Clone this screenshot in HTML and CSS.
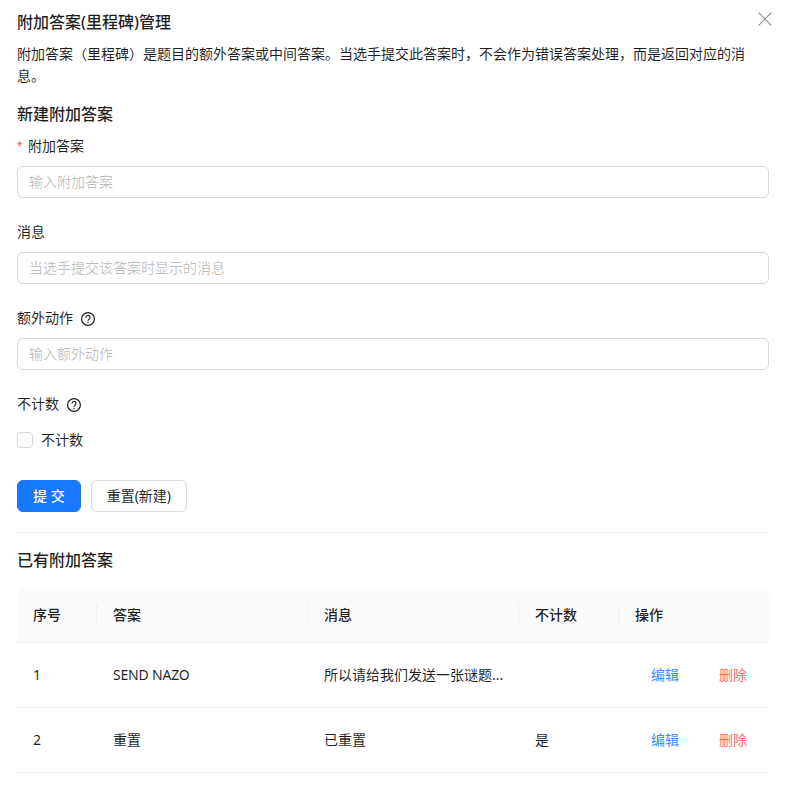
FILE: index.html
```html
<!DOCTYPE html>
<html lang="zh-CN">
<head>
<meta charset="utf-8">
<title>附加答案(里程碑)管理</title>
<link rel="stylesheet" href="styles.css">
</head>
<body>
<div class="modal">
  <button class="close" type="button" aria-label="关闭">
    <svg width="14" height="14" viewBox="0 0 14 14"><path d="M.7.7l12.6 12.6M13.3.7L.7 13.3" fill="none" stroke="currentColor" stroke-width="1.2"/></svg>
  </button>
  <h1 class="title">附加答案(里程碑)管理</h1>
  <p class="desc">附加答案（里程碑）是题目的额外答案或中间答案。当选手提交此答案时，不会作为错误答案处理，而是返回对应的消息。</p>
  <h2 class="section first">新建附加答案</h2>
  <form class="form">
    <div class="item">
      <label class="label"><span class="req">*</span>附加答案</label>
      <input class="input" placeholder="输入附加答案">
    </div>
    <div class="item">
      <label class="label">消息</label>
      <input class="input" placeholder="当选手提交该答案时显示的消息">
    </div>
    <div class="item">
      <label class="label">额外动作<svg class="help" width="14" height="14" viewBox="0 0 14 14"><circle cx="7" cy="7" r="6.4" fill="none" stroke="currentColor" stroke-width="1.2"/><path d="M5 5.5a2 2 0 1 1 3 1.7c-.7.4-1 .8-1 1.5" fill="none" stroke="currentColor" stroke-width="1.2"/><circle cx="7" cy="10.4" r=".75" fill="currentColor"/></svg></label>
      <input class="input" placeholder="输入额外动作">
    </div>
    <div class="item">
      <label class="label">不计数<svg class="help" width="14" height="14" viewBox="0 0 14 14"><circle cx="7" cy="7" r="6.4" fill="none" stroke="currentColor" stroke-width="1.2"/><path d="M5 5.5a2 2 0 1 1 3 1.7c-.7.4-1 .8-1 1.5" fill="none" stroke="currentColor" stroke-width="1.2"/><circle cx="7" cy="10.4" r=".75" fill="currentColor"/></svg></label>
      <div class="check-row"><span class="checkbox"></span><span>不计数</span></div>
    </div>
    <div class="buttons">
      <button class="btn primary" type="button">提 交</button>
      <button class="btn" type="button">重置(新建)</button>
    </div>
  </form>
  <hr class="divider">
  <h2 class="section">已有附加答案</h2>
  <table class="table">
    <colgroup><col class="c1"><col class="c2"><col class="c3"><col class="c4"><col class="c5"></colgroup>
    <thead>
      <tr><th>序号</th><th>答案</th><th>消息</th><th>不计数</th><th>操作</th></tr>
    </thead>
    <tbody>
      <tr>
        <td>1</td><td><span class="latin">SEND NAZO</span></td><td class="nowrap">所以请给我们发送一张谜题...</td><td></td>
        <td class="actions"><a class="link">编辑</a><a class="link danger">删除</a></td>
      </tr>
      <tr>
        <td>2</td><td>重置</td><td>已重置</td><td>是</td>
        <td class="actions"><a class="link">编辑</a><a class="link danger">删除</a></td>
      </tr>
    </tbody>
  </table>
</div>
</body>
</html>
```
FILE: styles.css
```css
* { box-sizing: border-box; }
html, body { margin: 0; background: #fff; }
body {
  font-family: "Noto Sans", "Noto Sans CJK SC", sans-serif;
  font-size: 14px;
  line-height: 22px;
  color: rgba(0,0,0,.88);
  height: 786px;
  overflow: hidden;
}
.modal { position: relative; padding: 10px 20px 0 17px; }
.close {
  position: absolute; top: 12px; right: 17px;
  width: 14px; height: 14px; padding: 0; border: 0; background: none;
  color: rgba(0,0,0,.45); display: flex;
}
.title { margin: 0 0 9px; font-size: 16px; line-height: 24px; font-weight: 500; }
.desc { margin: 0; width: 752px; }
.section { margin: 0; font-size: 16px; line-height: 24px; font-weight: 500; }
.section.first { margin: 15px 0 10px; }
.item { margin-bottom: 24px; }
.label { display: flex; align-items: flex-start; height: 22px; line-height: 20px; margin-bottom: 8px; }
.req { color: #ff4d4f; margin-right: 4px; font-family: "Liberation Sans", sans-serif; width: 7px; }
.help { margin-left: 8px; align-self: center; color: rgba(0,0,0,.88); }
.input {
  display: block; width: 100%; height: 32px; padding: 3px 11px 5px;
  border: 1px solid #d9d9d9; border-radius: 6px;
  font: inherit; color: inherit; outline: 0; background: #fff;
}
.input::placeholder { color: rgba(0,0,0,.25); opacity: 1; }
.check-row { display: flex; align-items: center; height: 32px; }
.checkbox { width: 16px; height: 16px; border: 1px solid #d9d9d9; border-radius: 4px; margin-right: 8px; background: #fff; }
.buttons { display: flex; gap: 10px; }
.btn {
  height: 32px; padding: 4px 15px; border: 1px solid #d9d9d9; border-radius: 6px;
  background: #fff; font: inherit; color: rgba(0,0,0,.88);
}
.btn.primary { background: #1677ff; border-color: #1677ff; color: #fff; font-weight: 500; }
.divider { margin: 20px 0 15px; border: 0; border-top: 1px solid rgba(5,5,5,.06); }
.table { width: 752px; margin-top: 16px; border-collapse: separate; border-spacing: 0; table-layout: fixed; }
.c1 { width: 80px; } .c2, .c3 { width: 211px; } .c4 { width: 100px; } .c5 { width: 150px; }
th {
  position: relative; height: 55px; padding: 16px; text-align: left; font-weight: 500;
  background: #fafafa; border-bottom: 1px solid #f0f0f0;
}
th:first-child { border-top-left-radius: 8px; }
th:last-child { border-top-right-radius: 8px; }
th:not(:last-child)::after {
  content: ""; position: absolute; right: 0; top: 50%; width: 1px; height: 22px;
  transform: translateY(-50%); background: #f0f0f0;
}
td { height: 65px; padding: 16px; border-bottom: 1px solid #f0f0f0; }
.latin { letter-spacing: -.2px; }
.nowrap { white-space: nowrap; }
.actions { white-space: nowrap; }
.link { display: inline-block; padding: 0 16px; color: #1677ff; opacity: .85; }
.link.danger { color: #ff4d4f; margin-left: 8px; }
```
